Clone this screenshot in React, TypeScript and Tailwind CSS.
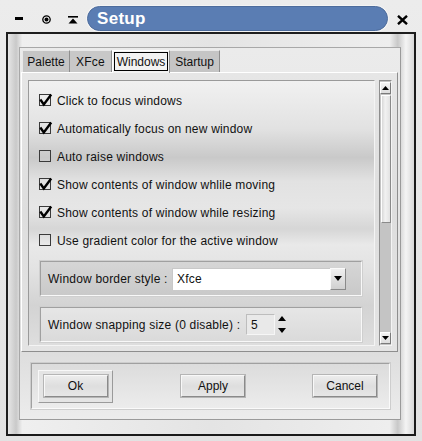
import React from "react";

const font = { fontFamily: '"Liberation Sans", Arial, sans-serif' };

function Check({ on }: { on: boolean }) {
  return (
    <svg width="13" height="14" viewBox="0 0 13 14" className="overflow-visible shrink-0">
      <rect x="0.5" y="0.5" width="11" height="11" fill="none" stroke="#3a3a3a" strokeWidth="1" />
      {on && (
        <path d="M2 6.5 L4.8 10.5 L11.5 1.5" fill="none" stroke="#000" strokeWidth="2.4" strokeLinecap="square" />
      )}
    </svg>
  );
}

function Row({ on, label }: { on: boolean; label: string }) {
  return (
    <div className="h-[28px] flex items-center pl-[10px] gap-[5px] text-[12px] text-[#111] tracking-[0.2px]">
      <Check on={on} />
      <span>{label}</span>
    </div>
  );
}

function Btn({ label }: { label: string }) {
  return (
    <div className="w-[64px] h-[22px] flex items-center justify-center text-[12px] text-[#111] border border-t-[#f8f8f8] border-l-[#f8f8f8] border-r-[#8a8a8a] border-b-[#8a8a8a] bg-[linear-gradient(to_bottom,#ececec,#dedede_50%,#e6e6e6)] outline outline-1 outline-[#b5b5b5]">
      {label}
    </div>
  );
}

export default function App() {
  return (
    <div
      className="w-[422px] h-[441px] bg-[linear-gradient(to_bottom,#ececec,#e2e2e2)] overflow-hidden select-none"
      style={font}
    >
      {/* Title bar */}
      <div className="h-[32px] flex items-center relative">
        <div className="absolute left-[15px] top-[17px] w-[8px] h-[3px] bg-black" />
        <svg className="absolute left-[42px] top-[15px]" width="9" height="9" viewBox="0 0 9 9">
          <circle cx="4.5" cy="4.5" r="3.7" fill="none" stroke="#000" strokeWidth="1.3" />
          <circle cx="4.5" cy="4.5" r="2" fill="#000" />
        </svg>
        <svg className="absolute left-[68px] top-[16px]" width="10" height="8" viewBox="0 0 10 8">
          <rect x="0" y="0" width="10" height="1.6" fill="#000" />
          <path d="M5 2.5 L9.5 7.5 L0.5 7.5 Z" fill="#000" />
        </svg>
        <div className="absolute left-[87px] top-[6px] w-[301px] h-[25px] rounded-full bg-[#5a7db3] border border-[#4d6c9c] shadow-[0_0_0_1px_#f4f4f4] flex items-center pl-[9px]">
          <span className="text-white font-bold text-[17px] leading-none tracking-[0.3px]">Setup</span>
        </div>
        <svg className="absolute left-[397px] top-[15px]" width="11" height="10" viewBox="0 0 11 10">
          <path d="M1 0.8 L10 9.2 M10 0.8 L1 9.2" stroke="#000" strokeWidth="2.4" />
        </svg>
      </div>

      {/* Window frame */}
      <div className="ml-[6px] w-[410px] h-[404px] border-2 border-l-[#1e1e1e] border-t-[#1e1e1e] border-r-[#1a1a1a] border-b-[#1a1a1a] bg-[linear-gradient(to_right,#e6e6e6,#c9c9c9_2%,#efefef_3.5%,#e4e4e4_50%,#eeeeee_94%,#c8c8c8_96%,#f4f4f4_98%,#d8d8d8)] pl-[11px] pt-[13px]">
        {/* Panel */}
        <div className="w-[382px] h-[373px] border border-t-[#a8a8a8] border-l-[#a8a8a8] border-r-[#9a9a9a] border-b-[#9a9a9a] bg-[linear-gradient(to_bottom,#ebebeb,#e3e3e3_60%,#dcdcdc_80%,#ececec)] pl-[1px] pt-[2px]">
          {/* Tabs */}
          <div className="flex items-end h-[22px] pl-[1px] text-[12px] text-[#111]">
            <div className="h-[22px] w-[48px] bg-[#c5c5c5] border-t border-l border-t-[#e8e8e8] border-l-[#e8e8e8] border-r border-r-[#8e8e8e] flex items-center justify-center">
              Palette
            </div>
            <div className="h-[22px] w-[42px] bg-[#c8c8c8] border-t border-t-[#e8e8e8] border-r border-r-[#8e8e8e] flex items-center justify-center tracking-[0.3px]">
              XFce
            </div>
            <div className="h-[23px] w-[58px] bg-[#f2f2f2] border-t border-l border-t-[#ffffff] border-l-[#ffffff] border-r border-r-[#8e8e8e] flex items-start pt-[1px] pl-[1px] -mb-[1px] relative z-10">
              <div className="w-[54px] h-[19px] border border-black flex items-center justify-center">Windows</div>
            </div>
            <div className="h-[22px] w-[50px] bg-[#c5c5c5] border-t border-t-[#e8e8e8] border-r border-r-[#8e8e8e] flex items-center justify-center">
              Startup
            </div>
          </div>
          {/* Page */}
          <div className="w-[377px] h-[280px] border border-t-[#ffffff] border-l-[#ffffff] border-r-[#8e8e8e] border-b-[#8e8e8e] bg-[linear-gradient(to_bottom,#e6e6e6,#dedede_50%,#e4e4e4)] flex pl-[6px] pt-[7px]">
            {/* Viewport */}
            <div className="w-[347px] h-[266px] border border-t-[#9a9a9a] border-l-[#9a9a9a] border-r-[#f4f4f4] border-b-[#f4f4f4] bg-[linear-gradient(to_bottom,#f1f1f1,#e2e2e2_18%,#c9c9c9_29%,#e2e2e2_38%,#e6e6e6_48%,#d6d6d6_56%,#e9e9e9_62%,#e2e2e2_72%,#d3d3d3_85%,#dedede)] pt-[6px]">
              <Row on label="Click to focus windows" />
              <Row on label="Automatically focus on new window" />
              <Row on={false} label="Auto raise windows" />
              <Row on label="Show contents of window whlile moving" />
              <Row on label="Show contents of window while resizing" />
              <Row on={false} label="Use gradient color for the active window" />
              {/* Group 1 */}
              <div className="ml-[11px] mt-[6px] w-[322px] h-[35px] border border-t-[#a0a0a0] border-l-[#a0a0a0] border-r-[#f8f8f8] border-b-[#f8f8f8] outline outline-1 outline-[#cfcfcf] bg-[linear-gradient(to_bottom,#d6d6d6,#c9c9c9)] flex items-center pl-[7px] text-[12px] text-[#111] tracking-[0.2px]">
                <span className="w-[124px]">Window border style :</span>
                <div className="w-[174px] h-[22px] flex">
                  <div className="flex-1 bg-white border-t border-l border-t-[#c8c8c8] border-l-[#c8c8c8] flex items-center pl-[4px]">
                    Xfce
                  </div>
                  <div className="w-[16px] h-[22px] bg-[linear-gradient(to_bottom,#f0f0f0,#d0d0d0)] border border-t-[#fafafa] border-l-[#fafafa] border-r-[#8a8a8a] border-b-[#8a8a8a] flex items-center justify-center">
                    <svg width="8" height="5" viewBox="0 0 8 5">
                      <path d="M0 0 L8 0 L4 5 Z" fill="#000" />
                    </svg>
                  </div>
                </div>
              </div>
              {/* Group 2 */}
              <div className="ml-[11px] mt-[11px] w-[322px] h-[35px] border border-t-[#a0a0a0] border-l-[#a0a0a0] border-r-[#f8f8f8] border-b-[#f8f8f8] outline outline-1 outline-[#cfcfcf] bg-[linear-gradient(to_bottom,#e6e6e6,#dadada)] flex items-center pl-[7px] text-[12px] text-[#111] tracking-[0.2px]">
                <span className="w-[198px]">Window snapping size (0 disable) :</span>
                <div className="w-[29px] h-[21px] bg-[#e9e9e9] border border-t-[#bdbdbd] border-l-[#bdbdbd] border-r-[#f6f6f6] border-b-[#f6f6f6] flex items-center pl-[4px]">
                  5
                </div>
                <div className="ml-[3px] flex flex-col gap-[7px]">
                  <svg width="8" height="5" viewBox="0 0 8 5">
                    <path d="M0 5 L8 5 L4 0 Z" fill="#000" />
                  </svg>
                  <svg width="8" height="5" viewBox="0 0 8 5">
                    <path d="M0 0 L8 0 L4 5 Z" fill="#000" />
                  </svg>
                </div>
              </div>
            </div>
            {/* Scrollbar */}
            <div className="ml-[4px] w-[13px] h-[266px] bg-[#c4c4c4] border border-t-[#8e8e8e] border-l-[#8e8e8e] border-r-[#f4f4f4] border-b-[#f4f4f4] flex flex-col items-center pt-[1px]">
              <div className="w-[11px] h-[12px] bg-[linear-gradient(to_bottom,#f4f4f4,#dcdcdc)] border border-t-[#fff] border-l-[#fff] border-r-[#7a7a7a] border-b-[#7a7a7a] flex items-center justify-center">
                <svg width="7" height="4" viewBox="0 0 7 4">
                  <path d="M0 4 L7 4 L3.5 0 Z" fill="#000" />
                </svg>
              </div>
              <div className="w-[10px] h-[128px] mt-[1px] bg-[linear-gradient(to_right,#d8d8d8,#f2f2f2_40%,#e2e2e2)] border border-t-[#fff] border-l-[#fff] border-r-[#8a8a8a] border-b-[#8a8a8a]" />
              <div className="flex-1" />
              <div className="w-[11px] h-[12px] mb-[1px] bg-[linear-gradient(to_bottom,#f4f4f4,#dcdcdc)] border border-t-[#fff] border-l-[#fff] border-r-[#7a7a7a] border-b-[#7a7a7a] flex items-center justify-center">
                <svg width="7" height="4" viewBox="0 0 7 4">
                  <path d="M0 0 L7 0 L3.5 4 Z" fill="#000" />
                </svg>
              </div>
            </div>
          </div>
          {/* Button box */}
          <div className="ml-[10px] mt-[11px] w-[359px] h-[46px] border border-t-[#a0a0a0] border-l-[#a0a0a0] border-r-[#fafafa] border-b-[#fafafa] outline outline-1 outline-[#cdcdcd] bg-[linear-gradient(to_bottom,#dcdcdc,#ececec)] flex items-center pl-[6px] pr-[12px] justify-between">
            <div className="w-[75px] h-[33px] border border-t-[#f8f8f8] border-l-[#f8f8f8] border-r-[#9a9a9a] border-b-[#9a9a9a] flex items-center justify-center bg-[#e4e4e4]">
              <Btn label="Ok" />
            </div>
            <Btn label="Apply" />
            <Btn label="Cancel" />
          </div>
        </div>
      </div>
    </div>
  );
}
